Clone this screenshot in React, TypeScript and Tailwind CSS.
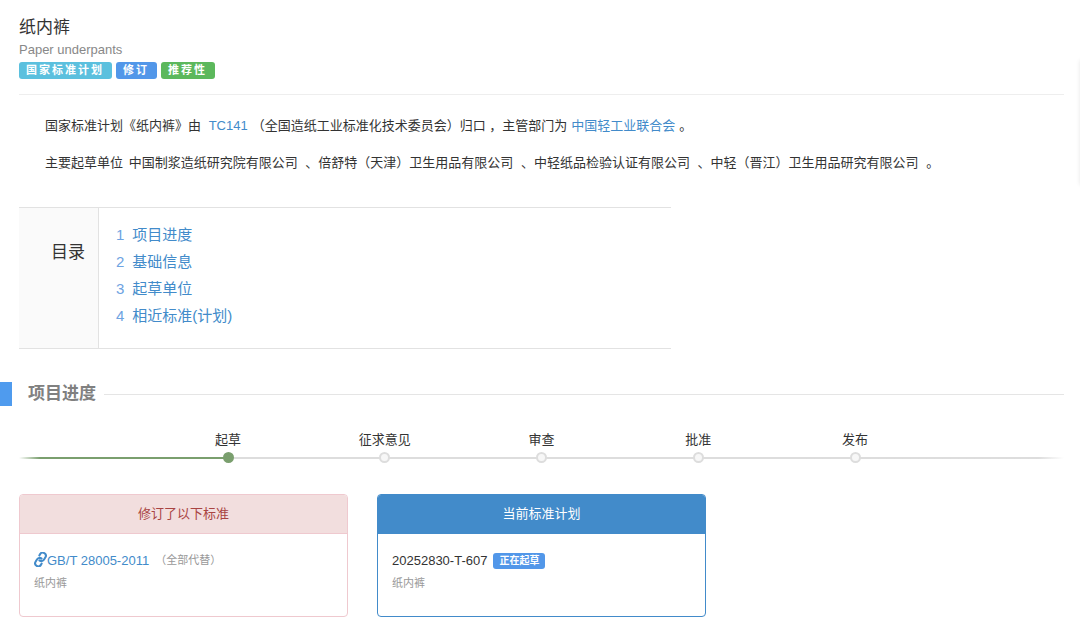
import React from "react";

const companies = [
  "中国制浆造纸研究院有限公司",
  "倍舒特（天津）卫生用品有限公司",
  "中轻纸品检验认证有限公司",
  "中轻（晋江）卫生用品研究有限公司",
];

const toc = [
  { id: "progress", text: "项目进度" },
  { id: "basic", text: "基础信息" },
  { id: "units", text: "起草单位" },
  { id: "related", text: "相近标准(计划)" },
];

const steps = [
  { label: "起草", done: true },
  { label: "征求意见", done: false },
  { label: "审查", done: false },
  { label: "批准", done: false },
  { label: "发布", done: false },
];

/* ---------- ChainIcon ---------- */
function ChainIcon() {
  return (
    <svg
      className="mb-[2px] h-[15px] w-[13px]"
      viewBox="1.5 0 21 24"
      fill="none"
      stroke="currentColor"
      strokeWidth="3.3"
      strokeLinecap="round"
      strokeLinejoin="round"
      aria-hidden="true"
    >
      <g transform="rotate(-14 12 12)">
        <path d="M10 13a5 5 0 0 0 7.54.54l3-3a5 5 0 0 0-7.07-7.07l-1.72 1.71" />
        <path d="M14 11a5 5 0 0 0-7.54-.54l-3 3a5 5 0 0 0 7.07 7.07l1.71-1.71" />
      </g>
    </svg>
  );
}

/* ---------- Tag ---------- */
function Tag({ color, children }: { color: string; children: React.ReactNode }) {
  return (
    <span className={`rounded-[3px] pr-2 pl-[7px] text-[11px] leading-[17px] font-bold tracking-[2px] text-white ${color}`}>
      {children}
    </span>
  );
}

/* ---------- Toc ---------- */
function Toc() {
  return (
    <nav aria-label="目录" className="mt-[26px] flex w-full max-w-[652px] border-y border-[#e2e2e2]">
      <div className="w-20 shrink-0 border-r border-[#e2e2e2] bg-[#fafafa] pt-[33px] pr-[13px] text-right text-[17px] leading-6">
        目录
      </div>
      <ol className="pt-[13px] pb-[19px] pl-[17px] text-[15px] leading-[27px]">
        {toc.map((t, i) => (
          <li key={t.id}>
            <a href={`#${t.id}`} className="flex gap-2 text-[#428bca]">
              <span className="text-[#6ea3e2]">{i + 1}</span>
              {t.text}
            </a>
          </li>
        ))}
      </ol>
    </nav>
  );
}

/* ---------- Progress ---------- */
function Progress() {
  return (
    <div className="relative mt-6">
      <div className="absolute inset-x-0 bottom-1 flex h-[2px]">
        <div className="w-1/5 bg-linear-to-r from-transparent to-[#7a9f6e] to-10%" />
        <div className="flex-1 bg-linear-to-r from-[#dddddd] from-97% to-transparent" />
      </div>
      <ol className="relative grid grid-cols-5 px-[12.5%]">
        {steps.map((s) => (
          <li key={s.label} className="flex flex-col items-center text-[13px] leading-5">
            {s.label}
            <span
              className={`mt-[2px] size-[11px] rounded-full border-2 ${
                s.done ? "border-[#7a9f6e] bg-[#7a9f6e]" : "border-[#dddddd] bg-[#f7f7f7]"
              }`}
            />
          </li>
        ))}
      </ol>
    </div>
  );
}

/* ---------- Panel ---------- */
function Panel({
  title, border, head, children,
}: { title: string; border: string; head: string; children: React.ReactNode }) {
  return (
    <div className={`overflow-hidden rounded border ${border}`}>
      <h3 className={`border-b text-center text-[13px] leading-[38px] ${border} ${head}`}>{title}</h3>
      <div className="px-[14px] pt-[15px] pb-[21px] text-[13px] leading-[23px]">{children}</div>
    </div>
  );
}

export default function App() {
  return (
    <main className="relative overflow-hidden bg-white pt-[17px] pr-4 pb-3 pl-[19px] font-['Liberation_Sans','Noto_Sans_CJK_SC',sans-serif] text-[#333333]">
      <header className="border-b border-[#eeeeee] pb-[15px]">
        <h1 className="text-[17px] leading-[22px]">纸内裤</h1>
        <p className="text-[13px] leading-[22px] text-[#888888]">Paper underpants</p>
        <div className="mt-px flex gap-1">
          <Tag color="bg-[#5bc0de]">国家标准计划</Tag>
          <Tag color="bg-[#5297e9]">修订</Tag>
          <Tag color="bg-[#5cb85c]">推荐性</Tag>
        </div>
      </header>

      <section className="pt-3 pl-[26px] text-[13px] leading-[37px]">
        <p>
          国家标准计划《纸内裤》由 <a href="#tc141" className="mx-1 text-[#428bca]">TC141</a>
          （全国造纸工业标准化技术委员会）归口 ，主管部门为
          <a href="#dept" className="mx-1 text-[#428bca]">中国轻工业联合会</a>。
        </p>
        <p>
          <span className="mr-[2px]">主要起草单位</span>{" "}
          {companies.map((c, i) => (
            <React.Fragment key={c}>
              <span className="mr-1">{c}</span> {i < companies.length - 1 ? "、" : "。"}
            </React.Fragment>
          ))}
        </p>
      </section>

      <Toc />

      <section id="progress" className="mt-[33px]">
        <div className="-ml-[19px] flex items-center">
          <span className="h-6 w-3 bg-[#4f9bee]" />
          <h2 className="mr-2 ml-4 text-[17px] leading-6 font-bold text-[#808080]">项目进度</h2>
          <hr className="flex-1 border-[#e5e5e5]" />
        </div>

        <Progress />

        <div className="mt-[31px] grid grid-cols-3 gap-[29px]">
          <Panel title="修订了以下标准" border="border-[#efc9cf]" head="bg-[#f2dede] text-[#a94442]">
            <div className="flex items-center">
              <a href="#gbt28005" className="flex items-center text-[#428bca]">
                <ChainIcon />
                GB/T 28005-2011
              </a>
              <span className="ml-[6px] text-[11px] text-[#999999]">（全部代替）</span>
            </div>
            <p className="text-[11px] leading-[23px] text-[#999999]">纸内裤</p>
          </Panel>
          <Panel title="当前标准计划" border="border-[#428bca]" head="bg-[#428bca] text-white">
            <div className="flex items-center gap-[6px]">
              20252830-T-607
              <span className="rounded-[3px] bg-[#5297e9] px-[6px] text-[10px] leading-4 font-bold text-white">
                正在起草
              </span>
            </div>
            <p className="text-[11px] leading-[23px] text-[#999999]">纸内裤</p>
          </Panel>
        </div>
      </section>

      {/* edge of the collapsed side drawer */}
      <div className="absolute top-[60px] -right-1 h-[125px] w-1 shadow-[0_0_4px_rgba(0,0,0,0.1)]" />
    </main>
  );
}
